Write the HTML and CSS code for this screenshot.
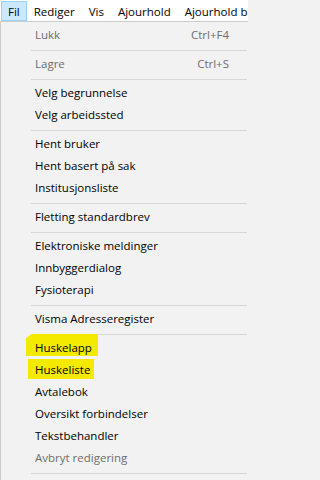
FILE: index.html
```html
<!DOCTYPE html>
<html lang="no">
<head>
<meta charset="utf-8">
<title>Fil-meny</title>
<link rel="stylesheet" href="styles.css">
</head>
<body>
<div class="screen">
  <div class="menubar">
    <span class="mb-item active">Fil</span>
    <span class="mb-item">Rediger</span>
    <span class="mb-item">Vis</span>
    <span class="mb-item">Ajourhold</span>
    <span class="mb-item">Ajourhold brukere</span>
  </div>
  <div class="dropdown">
    <div class="item disabled"><span class="label">Lukk</span><span class="shortcut">Ctrl+F4</span></div>
    <div class="sep"></div>
    <div class="item disabled"><span class="label">Lagre</span><span class="shortcut">Ctrl+S</span></div>
    <div class="sep"></div>
    <div class="item"><span class="label">Velg begrunnelse</span></div>
    <div class="item"><span class="label">Velg arbeidssted</span></div>
    <div class="sep"></div>
    <div class="item"><span class="label">Hent bruker</span></div>
    <div class="item"><span class="label">Hent basert på sak</span></div>
    <div class="item"><span class="label">Institusjonsliste</span></div>
    <div class="sep"></div>
    <div class="item"><span class="label">Fletting standardbrev</span></div>
    <div class="sep"></div>
    <div class="item"><span class="label">Elektroniske meldinger</span></div>
    <div class="item"><span class="label">Innbyggerdialog</span></div>
    <div class="item"><span class="label">Fysioterapi</span></div>
    <div class="sep"></div>
    <div class="item"><span class="label">Visma Adresseregister</span></div>
    <div class="sep"></div>
    <div class="item"><span class="label mark mark-1">Huskelapp</span></div>
    <div class="item"><span class="label mark mark-2">Huskeliste</span></div>
    <div class="item"><span class="label">Avtalebok</span></div>
    <div class="item"><span class="label">Oversikt forbindelser</span></div>
    <div class="item"><span class="label">Tekstbehandler</span></div>
    <div class="item disabled"><span class="label">Avbryt redigering</span></div>
    <div class="sep"></div>
  </div>
</div>
</body>
</html>
```
FILE: styles.css
```css
html {
  margin: 0;
  padding: 0;
  background: #f2f2f2;
}
body {
  margin: 0;
  padding: 0;
  font-family: "Open Sans", "Noto Sans", "Liberation Sans", sans-serif;
  font-size: 11.5px;
  color: #000;
}
.screen {
  width: 248px;
  height: 480px;
  overflow: hidden;
  background: #f2f2f2;
}
.menubar {
  display: flex;
  height: 21px;
  background: #ffffff;
  white-space: nowrap;
  overflow: hidden;
}
.mb-item {
  display: block;
  flex: none;
  height: 20px;
  margin-top: 1px;
  padding: 1px 6px 0;
  border: 1px solid transparent;
  box-sizing: border-box;
  line-height: 18px;
}
.mb-item.active {
  margin-left: 1px;
  background: #cce8ff;
  border-color: #99d1ff;
}
.dropdown {
  height: 455px;
  border-top: 1px solid #cccccc;
  border-left: 1px solid #cccccc;
  background: #f2f2f2;
  padding-top: 3px;
  overflow: hidden;
}
.item {
  display: flex;
  align-items: flex-start;
  height: 22px;
  line-height: 20px;
  padding: 0 19px 0 34px;
  white-space: nowrap;
}
.label {
  flex: 1;
}
.shortcut {
  flex: none;
}
.item.disabled {
  color: #6d6d6d;
}
.sep {
  height: 1px;
  margin: 3px 1px 3px 30px;
  background: #d7d7d7;
}
.mark {
  flex: none;
  background: #f4ea00;
}
.mark-1 {
  margin: -4px 0 0 -9px;
  padding: 0 6px 0 9px;
  height: 22px;
  line-height: 28px;
  clip-path: polygon(0 18%, 8% 0, 100% 0, 100% 100%, 0 100%);
}
.mark-2 {
  margin: -1px 0 0 -7px;
  padding: 0 4px 0 7px;
  height: 20px;
  line-height: 22px;
}
```
